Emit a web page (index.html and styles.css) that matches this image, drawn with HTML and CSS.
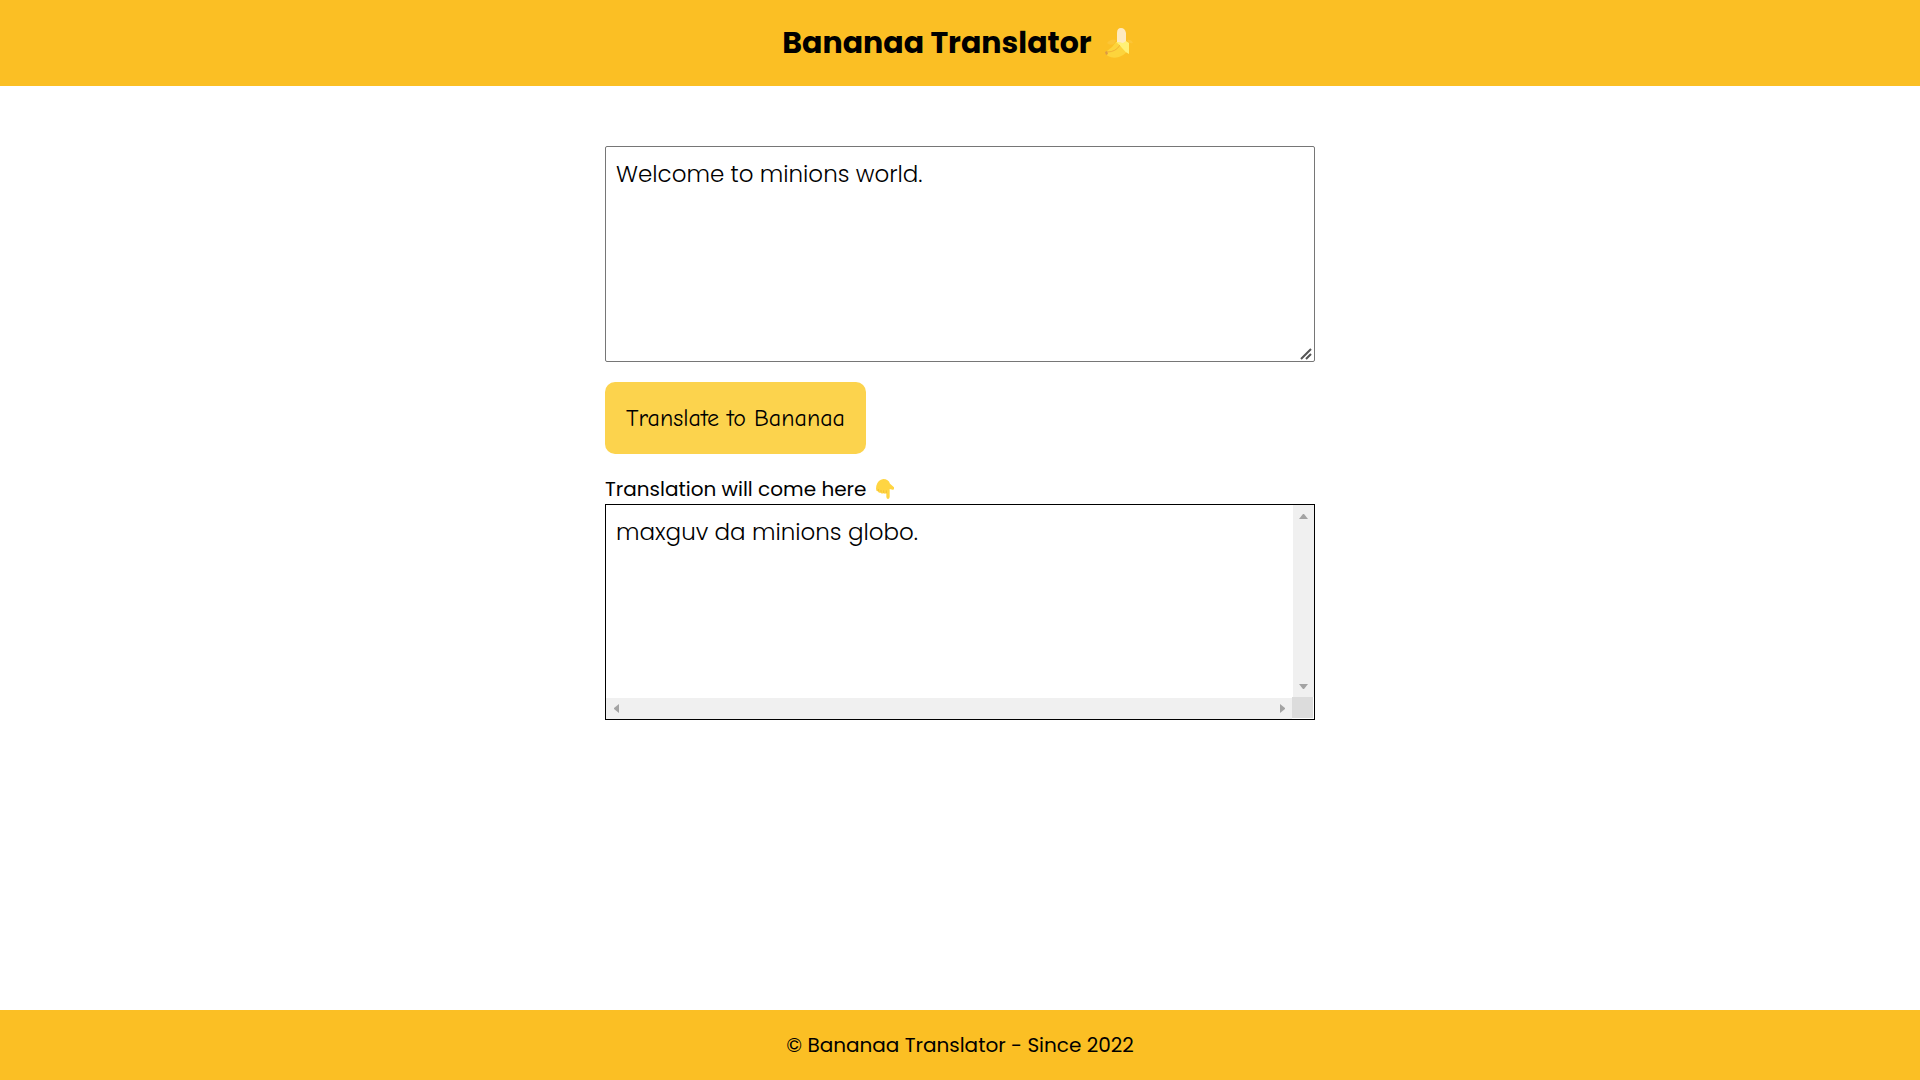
FILE: index.html
```html
<!DOCTYPE html>
<html lang="en">
<head>
<meta charset="utf-8">
<meta name="viewport" content="width=device-width, initial-scale=1">
<title>Bananaa Translator</title>
<link rel="stylesheet" href="styles.css">
</head>
<body>
<header class="header">
  <h1 class="title">Bananaa Translator
    <svg class="banana" viewBox="0 0 34 34" aria-hidden="true">
      <path fill="#fcc536" d="M3 17q4-5 9-3l-2 4q-4 2-7-1zM23 14q4-1 6 3-4 1-6-3z"/>
      <path fill="#feeac0" d="M13 16V7q0-5 4-5t5 5v10l-3 2z"/>
      <path fill="#fdd43c" d="M12 16q-3 5-9 9-2 3 1 5 5 3 11 1 5-2 8-5l-6-9z"/>
      <path fill="none" stroke="#f2b233" stroke-width="1" d="M3 26q9 0 13-7"/>
      <path fill="#fff176" d="M12 16q4 0 7 1l3-2 3 2v11q-4-2-7-6-3-4-6-6z"/>
      <path fill="#dc9a44" d="M1 26l2-1 1 3-2 1z"/>
    </svg>
  </h1>
</header>
<main class="main">
  <textarea class="input" aria-label="Text to translate">Welcome to minions world.</textarea>
  <button class="translate" type="button">Translate to Bananaa</button>
  <p class="caption">Translation will come here
    <svg class="hand" viewBox="0 0 54 60" aria-hidden="true">
      <path fill="#ffd542" d="M1 20Q6 2 22 0q15 0 20 14l13 12q1 6-5 6l-9-2v24q-1 6-5 6t-5-6V43q-5 2-8 0-6 2-9-2-6 2-8-4-6 0-6-8z"/>
      <path fill="none" stroke="#efb52d" stroke-width="2" d="M7 30v7M15 33v7M23 34v8M31 34v9"/>
    </svg>
  </p>
  <div class="output">
    <div class="result">maxguv da minions globo.</div>
    <div class="bar bar-y" aria-hidden="true">
      <svg class="arrow" viewBox="0 0 9 9"><path d="M4 2h1l4 5H0z"/></svg>
      <svg class="arrow" viewBox="0 0 9 9"><path d="M0 2h9L5 7H4z"/></svg>
    </div>
    <div class="bar bar-x" aria-hidden="true">
      <svg class="arrow" viewBox="0 0 9 9"><path d="M7 0v9L2 5V4z"/></svg>
      <svg class="arrow" viewBox="0 0 9 9"><path d="M2 0l5 4v1L2 9z"/></svg>
    </div>
    <div class="corner"></div>
  </div>
</main>
<footer class="footer">© Bananaa Translator - Since 2022</footer>
</body>
</html>
```
FILE: styles.css
```css
* { box-sizing: border-box; }

body {
  margin: 0;
  min-height: 100vh;
  display: flex;
  flex-direction: column;
  font-family: Poppins, Inter, sans-serif;
  font-size: 20px;
  line-height: 30px;
  color: #000;
  background: #fff;
}

.header {
  padding: 20px;
  background: #fbbf24;
}

.title {
  margin: 0;
  display: flex;
  justify-content: center;
  align-items: center;
  gap: 12px;
  font-size: 30px;
  line-height: 46px;
  font-weight: 700;
}

.banana { width: 34px; height: 34px; }

.main {
  flex: 1;
  width: 100%;
  max-width: 750px;
  margin: 0 auto;
  padding: 60px 20px;
  display: flex;
  flex-direction: column;
  align-items: flex-start;
}

.input,
.output {
  width: 100%;
  height: 216px;
  font-size: 23px;
  font-weight: 300;
  line-height: 34px;
}

.input {
  margin: 0;
  padding: 10px;
  border: 1px solid #767676;
  border-radius: 2px;
  font-family: inherit;
  color: #000;
  background: #fff;
  resize: both;
}

.input::-webkit-resizer {
  background: url("data:image/svg+xml,%3Csvg xmlns='http://www.w3.org/2000/svg' width='15' height='15'%3E%3Cpath d='M2 13L12 3M7 13l5-5' stroke='%23555' stroke-width='2'/%3E%3C/svg%3E") no-repeat;
}

.translate {
  margin: 20px 0;
  padding: 20px 21px;
  border: 0;
  border-radius: 10px;
  font-family: "Comic Sans MS", "Comic Neue", Lato, sans-serif;
  font-size: 24px;
  line-height: 32px;
  color: #000;
  background: #fcd34d;
}

.caption {
  margin: 0;
  display: flex;
  align-items: center;
  gap: 10px;
}

.hand { width: 18px; height: 20px; }

.output {
  display: grid;
  grid-template-columns: 1fr 21px;
  grid-template-rows: 1fr 21px;
  padding: 0 1px 1px 0;
  border: 1px solid #000;
}

.result { padding: 10px; }

.bar {
  display: flex;
  justify-content: space-between;
  align-items: center;
  background: #f0f0f0;
}

.bar-y {
  flex-direction: column;
  margin: 0 -1px 0 1px;
  padding: 7px 0 6px;
}

.bar-x {
  margin: 1px 0 -1px;
  padding: 0 5px 0 6px;
}

.arrow { width: 9px; height: 9px; fill: #a3a3a3; }

.corner { background: #dcdcdc; }

.footer {
  padding: 20px;
  text-align: center;
  background: #fbbf24;
}
```
